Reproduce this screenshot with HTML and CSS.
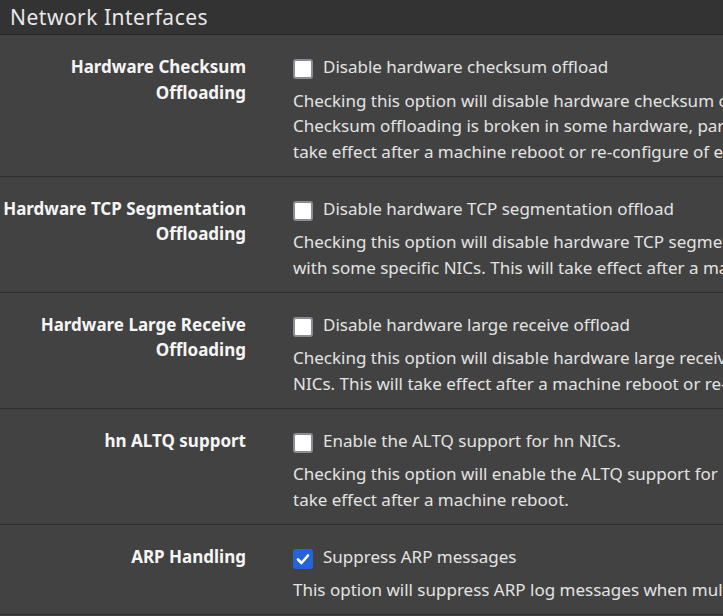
FILE: index.html
```html
<!DOCTYPE html>
<html>
<head>
    <title>Network Interfaces</title>
    <link rel="stylesheet" href="styles.css">
</head>
<body>
    <div class="panel">
        <div class="panel-heading">
            <h2 class="panel-title">Network Interfaces</h2>
        </div>
        <div class="panel-body">

            <div class="form-group">
                <label class="control-label">Hardware Checksum Offloading</label>
                <div class="control">
                    <label class="checkbox"><span class="box"></span> Disable hardware checksum offload</label>
                    <p class="help-block">Checking this option will disable hardware checksum offloading.<br>Checksum offloading is broken in some hardware, particularly some Realtek cards. Rarely, drivers may have problems with checksum offloading and some specific NICs. This will<br>take effect after a machine reboot or re-configure of each interface.</p>
                </div>
            </div>

            <div class="form-group">
                <label class="control-label">Hardware TCP Segmentation Offloading</label>
                <div class="control">
                    <label class="checkbox"><span class="box"></span> Disable hardware TCP segmentation offload</label>
                    <p class="help-block">Checking this option will disable hardware TCP segmentation offloading (TSO, TSO4, TSO6). This offloading is broken in some hardware drivers, and may impact performance<br>with some specific NICs. This will take effect after a machine reboot or re-configure of each interface.</p>
                </div>
            </div>

            <div class="form-group">
                <label class="control-label">Hardware Large Receive Offloading</label>
                <div class="control">
                    <label class="checkbox"><span class="box"></span> Disable hardware large receive offload</label>
                    <p class="help-block">Checking this option will disable hardware large receive offloading (LRO). This offloading is broken in some hardware drivers, and may impact performance with some specific<br>NICs. This will take effect after a machine reboot or re-configure of each interface.</p>
                </div>
            </div>

            <div class="form-group">
                <label class="control-label">hn ALTQ support</label>
                <div class="control">
                    <label class="checkbox"><span class="box"></span> Enable the ALTQ support for hn NICs.</label>
                    <p class="help-block">Checking this option will enable the ALTQ support for hn NICs. The ALTQ support disables the multiqueue API and may reduce the system capability to handle traffic. This will<br>take effect after a machine reboot.</p>
                </div>
            </div>

            <div class="form-group">
                <label class="control-label">ARP Handling</label>
                <div class="control">
                    <label class="checkbox"><span class="box checked"><svg viewBox="0 0 20 20" width="20" height="20"><path d="M5 10.5 L8.5 14 L15 6.5" fill="none" stroke="#fff" stroke-width="2.6" stroke-linecap="round" stroke-linejoin="round"/></svg></span> Suppress ARP messages</label>
                    <p class="help-block">This option will suppress ARP log messages when multiple interfaces reside on the same broadcast domain.</p>
                </div>
            </div>

        </div>
    </div>
</body>
</html>
```

FILE: styles.css
```css
html, body {
    margin: 0;
    padding: 0;
    overflow: hidden;
}

body {
    font-family: "Noto Sans", "Open Sans", sans-serif;
    font-size: 17px;
    line-height: 1.5;
    background-color: #424242;
    color: #e3e3e3;
}

.panel-heading {
    height: 34px;
    background: #333333;
    border-bottom: 1px solid #262626;
    padding-left: 10px;
}

.panel-title {
    margin: 0;
    font-size: 21px;
    font-weight: normal;
    line-height: 35px;
    color: #e8e8e8;
    letter-spacing: 0.5px;
}

.form-group {
    display: grid;
    grid-template-columns: 246px 1400px;
    column-gap: 47px;
    padding: 19px 0 11.5px 0;
    border-bottom: 1px solid #2e2e2e;
}

.control-label {
    text-align: right;
    font-weight: bold;
    color: #f5f5f5;
}

.checkbox {
    display: flex;
    align-items: flex-start;
    gap: 10px;
    white-space: nowrap;
}

.box {
    box-sizing: border-box;
    flex: none;
    width: 20px;
    height: 20px;
    margin-top: 5px;
    background: #fff;
    border: 2px solid #8b8b96;
    border-radius: 3px;
}

.box.checked {
    background: #2563d8;
    border: none;
    border-radius: 3px;
}

.box svg {
    display: block;
}

.help-block {
    margin: 8px 0 0 0;
    white-space: nowrap;
}
```
